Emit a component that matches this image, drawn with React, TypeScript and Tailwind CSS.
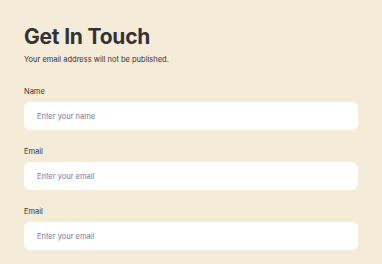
export default function App() {
  const fields = [
    { label: 'Name', placeholder: 'Enter your name' },
    { label: 'Email', placeholder: 'Enter your email' },
    { label: 'Email', placeholder: 'Enter your email' },
  ]

  return (
    <div className="h-[264px] w-[382px] overflow-hidden bg-[#f5ebd9] px-6 pt-[26px] font-['Inter',sans-serif]">
      <h1 className="text-[21px] font-bold leading-[22px] tracking-[-0.2px] text-[#333333]">Get In Touch</h1>
      <p className="mt-[7px] text-[7.5px] leading-[10px] text-[#333333]">Your email address will not be published.</p>
      <form className="mt-[22px] flex flex-col gap-[17px]">
        {fields.map((f, i) => (
          <label key={i} className="flex flex-col">
            <span className="text-[7.5px] leading-[10px] text-[#333333]">{f.label}</span>
            <input
              type="text"
              placeholder={f.placeholder}
              className="mt-[5px] h-[28px] w-full rounded-[6px] bg-white px-[13px] text-[7.5px] text-[#333333] outline-none placeholder:text-[#7d7699]"
            />
          </label>
        ))}
      </form>
    </div>
  )
}
